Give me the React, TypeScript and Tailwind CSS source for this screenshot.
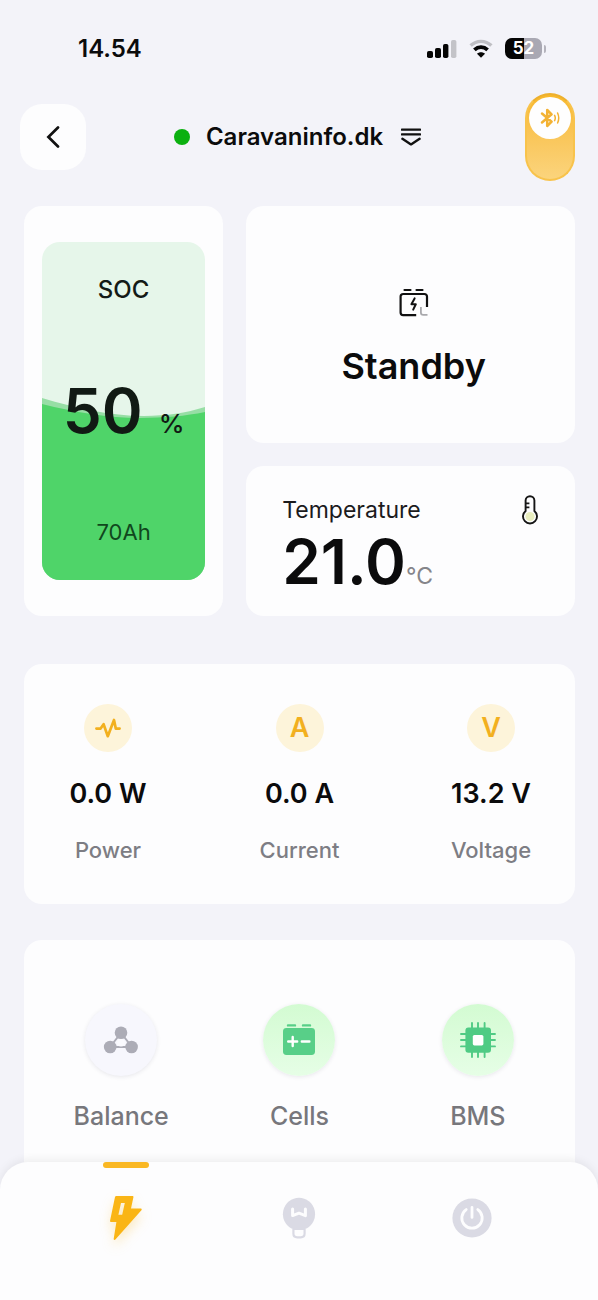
import React, { useState } from "react";

interface IconProps {
  className?: string;
}

const SignalIcon: React.FC<IconProps> = ({ className }) => (
  <svg viewBox="0 0 30 20" className={className} aria-hidden="true">
    <rect x="0" y="12" width="6" height="7" rx="1.8" fill="#050505" />
    <rect x="8" y="9" width="6" height="10" rx="1.8" fill="#050505" />
    <rect x="16" y="5" width="5.4" height="14" rx="1.8" fill="#050505" />
    <rect x="24" y="1" width="5.4" height="18" rx="1.8" fill="#c3c3c8" />
  </svg>
);

const WifiIcon: React.FC<IconProps> = ({ className }) => (
  <svg viewBox="0 0 24 20" className={className} fill="none" aria-hidden="true">
    <path d="M1.6 6.6C7.6.9 16.4.9 22.4 6.6" stroke="#bfbfc4" strokeWidth="3.4" />
    <path d="M5.4 10.9c3.9-3.6 9.3-3.6 13.2 0" stroke="#050505" strokeWidth="3.8" />
    <path d="M12 18.8 8 14.8c2.300-2 5.700-2 8 0z" fill="#050505" />
  </svg>
);

const BackIcon: React.FC<IconProps> = ({ className }) => (
  <svg viewBox="0 0 14 22" className={className} fill="none" aria-hidden="true">
    <path d="M12 1.5 2.4 11 12 20.5" stroke="#111" strokeWidth="2.7" strokeLinecap="round" />
  </svg>
);

const SwitchDeviceIcon: React.FC<IconProps> = ({ className }) => (
  <svg viewBox="0 0 20 18" className={className} fill="none" aria-hidden="true">
    <path
      d="M1 1.6h18M1 6.400h18M1.400 10.800 10 16.400l8.600-5.600"
      stroke="#111"
      strokeWidth="2.4"
      strokeLinecap="round"
      strokeLinejoin="round"
    />
  </svg>
);

const BluetoothIcon: React.FC<IconProps> = ({ className }) => (
  <svg viewBox="0 0 20 20" className={className} fill="none" aria-hidden="true">
    <path
      d="m2 5.5 9.6 8.2L7.2 18V2l4.4 4.3L2 14.5"
      stroke="#f3b233"
      strokeWidth="2.5"
      strokeLinecap="round"
      strokeLinejoin="round"
    />
    <path
      d="M14.6 7.4c.9 1.7.9 3.5 0 5.2M17.6 5c1.5 3.3 1.5 6.7 0 10"
      stroke="#f3b233"
      strokeWidth="1.5"
      strokeLinecap="round"
    />
  </svg>
);

const StandbyIcon: React.FC<IconProps> = ({ className }) => (
  <svg viewBox="0 0 30 30" className={className} fill="none" aria-hidden="true">
    <path d="M5.5 2h6M17.5 2h6" stroke="#111" strokeWidth="2.2" strokeLinecap="round" />
    <path
      d="M28 19V8.6c0-1.6-1-2.6-2.6-2.6H4.2C2.6 6 1.6 7 1.6 8.6v16c0 1.6 1 2.6 2.6 2.6h13"
      stroke="#111"
      strokeWidth="2.2"
    />
    <path
      d="m15.6 10.4-3.200 5.800h4.400l-2.600 5.400"
      stroke="#111"
      strokeWidth="2"
      strokeLinecap="round"
      strokeLinejoin="round"
    />
    <path d="M21.9 19v5.4c0 1.4 1 2.4 2.4 2.4h4.2" stroke="#a9a9ad" strokeWidth="1.8" />
  </svg>
);

const ThermometerIcon: React.FC<IconProps> = ({ className }) => (
  <svg viewBox="0 0 18 30" className={className} fill="none" aria-hidden="true">
    <circle cx="9" cy="21.6" r="4.6" fill="#e9eebf" />
    <path
      d="M4.6 16V5.6a4.4 4.4 0 0 1 8.8 0V16a7 7 0 1 1-8.8 0z"
      stroke="#151515"
      strokeWidth="1.9"
    />
    <path d="M5 8.4h3.4M5 12.4h3.4" stroke="#151515" strokeWidth="1.7" />
  </svg>
);

const PulseIcon: React.FC<IconProps> = ({ className }) => (
  <svg viewBox="0 0 26 20" className={className} fill="none" aria-hidden="true">
    <path
      d="M1.4 10.6h4.2L8.600 6.200l4.200 12L19 2l1.800 8.600h3.800"
      stroke="#f2b01f"
      strokeWidth="2.7"
      strokeLinecap="round"
      strokeLinejoin="round"
    />
  </svg>
);

const BalanceIcon: React.FC<IconProps> = ({ className }) => (
  <svg viewBox="0 0 36 28" className={className} aria-hidden="true">
    <path d="M18 7 7 21h22z" fill="none" stroke="#acacb6" strokeWidth="2" />
    <circle cx="18" cy="6.8" r="6.3" fill="#acacb6" />
    <circle cx="7.2" cy="21" r="6.3" fill="#acacb6" />
    <circle cx="28.6" cy="21" r="6.3" fill="#acacb6" />
    <circle cx="18" cy="16.8" r="3.8" fill="#fafafe" />
  </svg>
);

const CellsIcon: React.FC<IconProps> = ({ className }) => (
  <svg viewBox="0 0 34 32" className={className} aria-hidden="true">
    <path d="M6 1.4h7M21 1.4h7" stroke="#58cf88" strokeWidth="2.4" strokeLinecap="round" />
    <rect x="1" y="4" width="32" height="27" rx="3.4" fill="#58cf88" />
    <path
      d="M6.2 17.5h9M10.7 13v9M19.8 17.5h7.6"
      stroke="#fff"
      strokeWidth="2.4"
      strokeLinecap="round"
    />
  </svg>
);

const ChipIcon: React.FC<IconProps> = ({ className }) => (
  <svg viewBox="0 0 36 36" className={className} aria-hidden="true">
    <path
      d="M12 1v34M18 1v34M24.6 1v34M1 12h34M1 18h34M1 24.4h34"
      stroke="#4fcb84"
      strokeWidth="1.9"
      strokeLinecap="round"
    />
    <rect x="5.4" y="5.4" width="25.6" height="25.4" rx="3" fill="#4fcb84" />
    <rect x="12.8" y="13" width="10.6" height="10.4" rx="1.6" fill="#fff" />
  </svg>
);

const BoltIcon: React.FC<IconProps> = ({ className }) => (
  <svg viewBox="0 0 34 46" className={className} aria-hidden="true">
    <path
      fillRule="evenodd"
      d="M7.4 1h16c.8 0 1.200.6 1 1.300L22 13.400h9.600c1 0 1.400 1 .8 1.800L6.400 44.600c-.8.9-1.900.4-1.700-.8L7.400 27H2.200c-.8 0-1.300-.6-1.100-1.400L6 2.100C6.200 1.400 6.700 1 7.400 1zM12 8 9.400 19.800h3.800L15.800 8z"
      fill="#fab515"
    />
  </svg>
);

const BulbIcon: React.FC<IconProps> = ({ className }) => (
  <svg viewBox="0 0 34 42" className={className} aria-hidden="true">
    <path d="M17 .8a16.300 16.300 0 0 1 7.600 30.600H9.400A16.300 16.300 0 0 1 17 .8z" fill="#dadae4" />
    <path
      d="M10.600 12v6.600l6.400-2.400 6.400 2.400V12"
      fill="none"
      stroke="#fdfdfe"
      strokeWidth="3"
      strokeLinecap="round"
      strokeLinejoin="round"
    />
    <path
      d="M11.400 32h11.200v4.600c0 2.400-1.400 3.800-3.800 3.800h-3.600c-2.400 0-3.800-1.400-3.800-3.800z"
      fill="#fdfdfe"
      stroke="#dadae4"
      strokeWidth="2.2"
    />
  </svg>
);

const PowerIcon: React.FC<IconProps> = ({ className }) => (
  <svg viewBox="0 0 40 40" className={className} fill="none" aria-hidden="true">
    <circle cx="20" cy="20" r="19.6" fill="#dadae4" />
    <path
      d="M14.200 11.600a10.200 10.200 0 1 0 11.600 0M20 9.400v10"
      stroke="#fdfdfe"
      strokeWidth="2.8"
      strokeLinecap="round"
    />
  </svg>
);

interface MetricProps {
  icon: React.ReactNode;
  value: string;
  label: string;
}

const Metric: React.FC<MetricProps> = ({ icon, value, label }) => (
  <div className="flex w-[84px] flex-col items-center">
    <div className="flex size-12 items-center justify-center rounded-full bg-[#fdf4da] text-[27px] leading-8 font-semibold text-[#f2b01f]">
      {icon}
    </div>
    <p className="mt-[26px] text-[27px] leading-8 font-semibold whitespace-nowrap">
      {value}
    </p>
    <p className="mt-6 text-[22px] leading-8 font-medium text-[#7d7d84]">
      {label}
    </p>
  </div>
);

interface ShortcutProps {
  icon: React.ReactNode;
  label: string;
  isActive?: boolean;
}

const Shortcut: React.FC<ShortcutProps> = ({ icon, label, isActive }) => (
  <button type="button" className="flex flex-col items-center">
    <span
      className={`flex size-[72px] items-center justify-center rounded-full shadow-[0_1px_4px_rgba(40,40,70,0.10)] ${
        isActive
          ? "bg-linear-to-b from-[#d3fbd2] to-[#e6fee6]"
          : "bg-[#f7f7fd]"
      }`}
    >
      {icon}
    </span>
    <span className="mt-6 text-[25px] leading-8 font-medium text-[#77777c]">
      {label}
    </span>
  </button>
);

const StatusBar: React.FC = () => (
  <div className="flex h-[93px] items-center justify-between pt-1 pr-[52px] pl-[78px]">
    <span className="text-[24px] leading-8 font-semibold">14.54</span>
    <div className="flex items-center">
      <SignalIcon className="h-5 w-[30px]" />
      <WifiIcon className="ml-3 h-5 w-6" />
      <div className="ml-3 flex h-[21px] w-[37px] items-center justify-center rounded-[7px] bg-linear-to-r from-[#050505] from-52% to-[#a9a8b3] to-52% text-[17px] font-bold text-white">
        52
      </div>
      <div className="ml-0.5 h-2 w-0.5 rounded-r-full bg-[#b4b3bc]" />
    </div>
  </div>
);

const Header: React.FC = () => {
  const [isConnected, setIsConnected] = useState(true);

  return (
    <header className="grid grid-cols-[1fr_auto_1fr] items-center pr-[23px] pl-5">
      <button
        type="button"
        aria-label="Back"
        className="flex size-[66px] items-center justify-center rounded-[22px] bg-[#fdfdfe]"
      >
        <BackIcon className="h-[22px] w-3.5" />
      </button>
      <button
        type="button"
        className="flex items-center text-[24px] leading-8 font-semibold"
      >
        <span className="mr-4 size-4 rounded-full bg-[#0bb010]" />
        Caravaninfo.dk
        <SwitchDeviceIcon className="ml-[18px] h-[18px] w-5" />
      </button>
      <label
        className={`flex h-[88px] w-[50px] cursor-pointer flex-col justify-self-end rounded-full border-2 p-0.5 ${
          isConnected
            ? "justify-start border-[#f8c34c] border-t-[#edb02e] bg-linear-to-b from-[#f8b82a] to-[#fbd47c]"
            : "justify-end border-gray-300 bg-gray-200"
        }`}
      >
        <input
          type="checkbox"
          role="switch"
          aria-label="Bluetooth"
          className="sr-only"
          checked={isConnected}
          onChange={() => setIsConnected(!isConnected)}
        />
        <span className="flex size-[42px] items-center justify-center rounded-full bg-[#fefefe]">
          <BluetoothIcon className="size-5" />
        </span>
      </label>
    </header>
  );
};

const ChargeCard: React.FC = () => (
  <section className="flex rounded-[18px] bg-[#fdfdfe] px-[18px] py-9">
    <div className="relative flex flex-1 flex-col items-center justify-between overflow-hidden rounded-[18px] bg-[#e6f6ea] py-8">
      <svg
        viewBox="0 0 163 338"
        preserveAspectRatio="none"
        className="absolute inset-0 size-full"
        aria-hidden="true"
      >
        <path d="M0 156C34 166 68 174 102 174c22 0 42-3 61-9v173H0z" fill="#97dea5" />
        <path d="M0 162c32 8 66 14 98 14 24 0 46-2 65-6v168H0z" fill="#4fd469" />
      </svg>
      <h2 className="relative text-[24px] leading-8 font-medium text-[#141a16]">
        SOC
      </h2>
      <p className="relative flex items-baseline text-[62px] leading-16 font-semibold text-[#111a14]">
        50
        <span className="ml-4 text-[26px] leading-8 font-medium">%</span>
      </p>
      <p className="relative text-[22px] leading-8 text-[#10471d]">70Ah</p>
    </div>
  </section>
);

const App: React.FC = () => {
  const [activeTab, setActiveTab] = useState("Energy");

  const tabs = [
    {
      name: "Energy",
      icon: (
        <BoltIcon className="h-[46px] w-[34px] drop-shadow-[0_6px_6px_rgba(250,190,50,0.30)]" />
      ),
    },
    { name: "Light", icon: <BulbIcon className="h-[42px] w-[34px]" /> },
    { name: "Power", icon: <PowerIcon className="size-10" /> },
  ];

  return (
    <div className="flex min-h-screen flex-col bg-[#f3f3f9] font-['Inter',sans-serif] text-[#0b0b0c]">
      <StatusBar />
      <Header />

      <main className="flex flex-1 flex-col pt-[25px] pr-[23px] pl-6">
        <div className="grid grid-cols-[20fr_33fr] gap-[23px]">
          <ChargeCard />
          <div className="flex flex-col gap-[23px]">
            <section className="flex h-[237px] flex-col items-center justify-center rounded-[18px] bg-[#fdfdfe] pt-7 pl-1.5">
              <StandbyIcon className="size-[30px]" />
              <h2 className="mt-6 text-[36px] leading-12 font-semibold">
                Standby
              </h2>
            </section>
            <section className="h-[150px] rounded-[18px] bg-[#fdfdfe] px-9 pt-7">
              <div className="flex items-center justify-between">
                <h2 className="text-[23px] leading-8 text-[#1b1b1d]">
                  Temperature
                </h2>
                <ThermometerIcon className="h-[30px] w-[18px]" />
              </div>
              <p className="flex items-baseline text-[62px] leading-[72px] font-semibold">
                21.0
                <span className="text-[23px] leading-8 font-normal text-[#85858a]">
                  °C
                </span>
              </p>
            </section>
          </div>
        </div>

        <section className="mt-12 flex h-[240px] justify-between rounded-[18px] bg-[#fdfdfe] px-[42px] pt-10">
          <Metric icon={<PulseIcon className="h-5 w-[26px]" />} value="0.0 W" label="Power" />
          <Metric icon="A" value="0.0 A" label="Current" />
          <Metric icon="V" value="13.2 V" label="Voltage" />
        </section>

        <section className="mt-9 grid flex-1 grid-cols-3 items-start rounded-t-[18px] bg-[#fdfdfe] px-2 pt-16 pb-12">
          <Shortcut icon={<BalanceIcon className="h-7 w-9" />} label="Balance" />
          <Shortcut icon={<CellsIcon className="h-8 w-[34px]" />} label="Cells" isActive />
          <Shortcut icon={<ChipIcon className="size-9" />} label="BMS" isActive />
        </section>
      </main>

      <nav className="sticky bottom-0 -mt-8 grid h-[138px] grid-cols-3 rounded-t-[28px] bg-[#fdfdfe] px-10 shadow-[0_-2px_10px_rgba(0,0,0,0.07)]">
        {tabs.map((tab) => (
          <button
            key={tab.name}
            type="button"
            aria-label={tab.name}
            onClick={() => setActiveTab(tab.name)}
            className="flex flex-col items-center"
          >
            <span
              className={`h-1.5 w-[46px] rounded-full ${
                activeTab === tab.name ? "bg-[#fab824]" : "bg-transparent"
              }`}
            />
            <span className="mt-6 flex h-[52px] items-center">{tab.icon}</span>
          </button>
        ))}
      </nav>
    </div>
  );
};

export default App;
